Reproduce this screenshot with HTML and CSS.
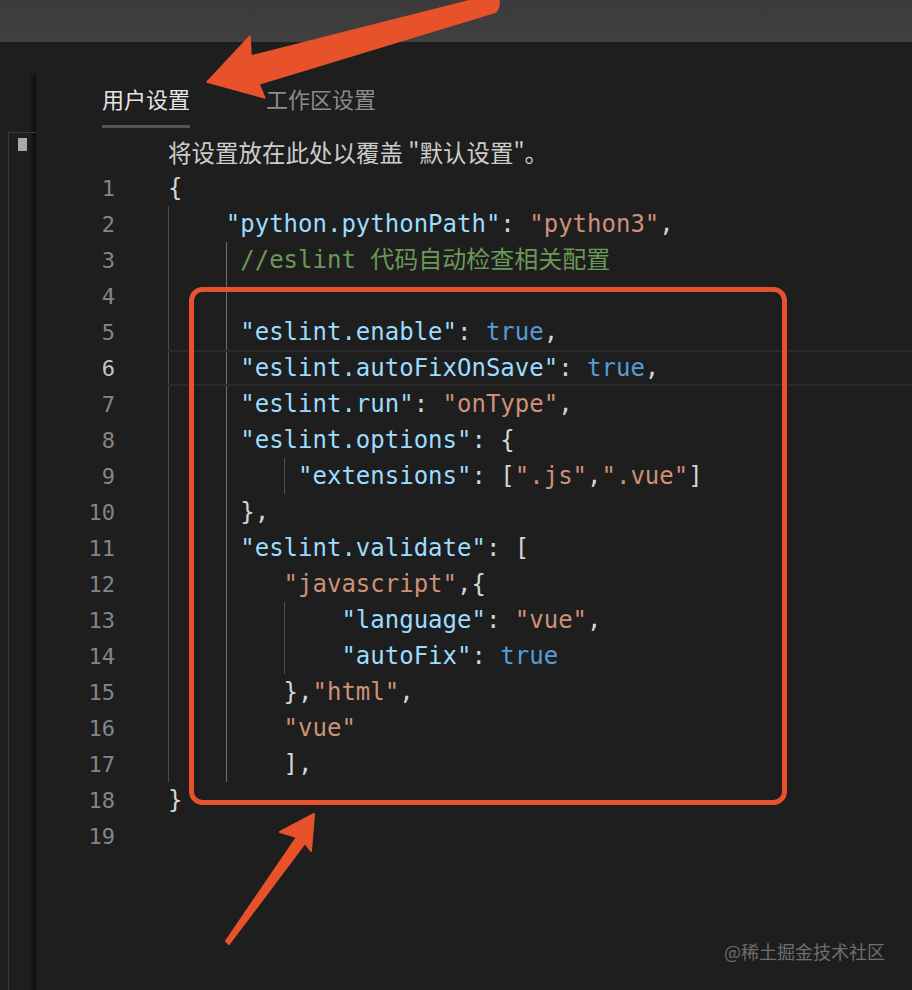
FILE: index.html
```html
<!DOCTYPE html>
<html lang="zh-CN">
<head>
<meta charset="utf-8">
<title>用户设置</title>
<link rel="stylesheet" href="styles.css">
</head>
<body>
<div class="window">
  <div class="titlebar"></div>
  <div class="main">
    <aside class="sidebar">
      <div class="sidebar-top"></div>
      <div class="sidebar-body">
        <div class="outline"><span class="marker"></span></div>
      </div>
    </aside>
    <section class="editor">
      <nav class="tabs">
        <span class="tab active">用户设置</span>
        <span class="tab">工作区设置</span>
      </nav>
      <div class="code">
        <div class="desc">将设置放在此处以覆盖 "默认设置"。</div>
        <div class="line"><span class="ln">1</span><span class="src"><span class="p">{</span></span></div>
        <div class="line"><span class="ln">2</span><span class="src"><span class="g g0">    </span><span class="k">"python.pythonPath"</span><span class="p">: </span><span class="s">"python3"</span><span class="p">,</span></span></div>
        <div class="line"><span class="ln">3</span><span class="src"><span class="g g0">    </span><span class="g g1"> </span><span class="c">//eslint 代码自动检查相关配置</span></span></div>
        <div class="line"><span class="ln">4</span><span class="src"><span class="g g0">    </span><span class="g g1"> </span></span></div>
        <div class="line"><span class="ln">5</span><span class="src"><span class="g g0">    </span><span class="g g1"> </span><span class="k">"eslint.enable"</span><span class="p">: </span><span class="b">true</span><span class="p">,</span></span></div>
        <div class="line current"><span class="ln">6</span><span class="src"><span class="g g0">    </span><span class="g g1"> </span><span class="k">"eslint.autoFixOnSave"</span><span class="p">: </span><span class="b">true</span><span class="p">,</span></span></div>
        <div class="line"><span class="ln">7</span><span class="src"><span class="g g0">    </span><span class="g g1"> </span><span class="k">"eslint.run"</span><span class="p">: </span><span class="s">"onType"</span><span class="p">,</span></span></div>
        <div class="line"><span class="ln">8</span><span class="src"><span class="g g0">    </span><span class="g g1"> </span><span class="k">"eslint.options"</span><span class="p">: {</span></span></div>
        <div class="line"><span class="ln">9</span><span class="src"><span class="g g0">    </span><span class="g g1">    </span><span class="g g2"> </span><span class="k">"extensions"</span><span class="p">: [</span><span class="s">".js"</span><span class="p">,</span><span class="s">".vue"</span><span class="p">]</span></span></div>
        <div class="line"><span class="ln">10</span><span class="src"><span class="g g0">    </span><span class="g g1"> </span><span class="p">},</span></span></div>
        <div class="line"><span class="ln">11</span><span class="src"><span class="g g0">    </span><span class="g g1"> </span><span class="k">"eslint.validate"</span><span class="p">: [</span></span></div>
        <div class="line"><span class="ln">12</span><span class="src"><span class="g g0">    </span><span class="g g1">    </span><span class="s">"javascript"</span><span class="p">,{</span></span></div>
        <div class="line"><span class="ln">13</span><span class="src"><span class="g g0">    </span><span class="g g1">    </span><span class="g g2">    </span><span class="k">"language"</span><span class="p">: </span><span class="s">"vue"</span><span class="p">,</span></span></div>
        <div class="line"><span class="ln">14</span><span class="src"><span class="g g0">    </span><span class="g g1">    </span><span class="g g2">    </span><span class="k">"autoFix"</span><span class="p">: </span><span class="b">true</span></span></div>
        <div class="line"><span class="ln">15</span><span class="src"><span class="g g0">    </span><span class="g g1">    </span><span class="p">},</span><span class="s">"html"</span><span class="p">,</span></span></div>
        <div class="line"><span class="ln">16</span><span class="src"><span class="g g0">    </span><span class="g g1">    </span><span class="s">"vue"</span></span></div>
        <div class="line"><span class="ln">17</span><span class="src"><span class="g g0">    </span><span class="g g1">    </span><span class="p">],</span></span></div>
        <div class="line"><span class="ln">18</span><span class="src"><span class="p">}</span></span></div>
        <div class="line"><span class="ln">19</span><span class="src"></span></div>
      </div>
    </section>
  </div>
  <svg class="annot" width="912" height="990" viewBox="0 0 912 990" xmlns="http://www.w3.org/2000/svg">
    <rect x="191.5" y="289.5" width="593" height="513" rx="11" ry="11" fill="none" stroke="#e8522a" stroke-width="5"/>
    <polygon points="207,82 250,36 251,56 480,-2 499,-2 499,6 496,12 259,84 265,98" fill="#e8522a" stroke="#e8522a" stroke-width="1.5" stroke-linejoin="round"/>
    <polygon points="314,814 280,832 297,837 226,941 229,944 305,843 311,851" fill="#e8522a" stroke="#e8522a" stroke-width="2" stroke-linejoin="round"/>
  </svg>
  <div class="watermark">@稀土掘金技术社区</div>
</div>
</body>
</html>
```

FILE: styles.css
```css
html, body {
  margin: 0;
  padding: 0;
  background: #1e1e1e;
}

.window {
  position: relative;
  width: 912px;
  height: 990px;
  overflow: hidden;
  background: #1e1e1e;
  display: flex;
  flex-direction: column;
}

.titlebar {
  height: 42px;
  flex: none;
  background: linear-gradient(to bottom, #3b3b3b, #404040);
}

.main {
  flex: 1;
  display: flex;
  min-height: 0;
}

.sidebar {
  width: 36px;
  flex: none;
  display: flex;
  flex-direction: column;
}

.sidebar-top {
  height: 33px;
  flex: none;
}

.sidebar-body {
  flex: 1;
  padding-top: 57px;
  display: flex;
  flex-direction: column;
  background: linear-gradient(to right, #1e1e1e 0, #1e1e1e 29px, #0c0c0c 36px);
}

.outline {
  flex: 1;
  margin-left: 8px;
  border-left: 1px solid #3c3c3c;
  border-top: 1px solid #3c3c3c;
  padding: 5px 0 0 9px;
}

.marker {
  display: block;
  width: 9px;
  height: 13px;
  background: #a9a9a9;
}

.editor {
  flex: 1;
  display: flex;
  flex-direction: column;
  min-width: 0;
}

.tabs {
  display: flex;
  gap: 76px;
  margin-top: 41px;
  padding-left: 66px;
}

.tab {
  font-family: "Noto Sans CJK SC", sans-serif;
  font-size: 22px;
  line-height: 30px;
  color: #8c8c8c;
  padding-bottom: 12px;
  border-bottom: 3px solid transparent;
}

.tab.active {
  color: #e6e6e6;
  border-bottom-color: #555555;
}

.code {
  margin-top: 6px;
  display: flex;
  flex-direction: column;
}

.desc {
  padding-left: 132px;
  font-family: "Noto Sans CJK SC", sans-serif;
  font-size: 23.5px;
  line-height: 36px;
  height: 36px;
  color: #cccccc;
}

.line {
  display: flex;
  height: 36px;
}

.ln {
  width: 79px;
  flex: none;
  text-align: right;
  font-family: "DejaVu Sans Mono", monospace;
  font-size: 22px;
  line-height: 37px;
  color: #858585;
}

.current .ln {
  color: #c6c6c6;
}

.src {
  flex: 1;
  margin-left: 53px;
  font-family: "DejaVu Sans Mono", "Noto Sans CJK SC", monospace;
  font-size: 24px;
  line-height: 36px;
  height: 36px;
  white-space: pre;
  color: #d4d4d4;
  box-sizing: border-box;
}

.current .src {
  border-top: 2px solid #2b2b2b;
  border-bottom: 2px solid #2b2b2b;
  line-height: 32px;
}

.g {
  display: inline-block;
  height: 36px;
  vertical-align: top;
}

.current .g {
  height: 32px;
}

.g0 { box-shadow: inset 1px 0 0 #4a4a4a; }
.g1 { box-shadow: inset 1px 0 0 #6e6e6e; }
.g2 { box-shadow: inset 1px 0 0 #4f4f4f; }

.p { color: #d4d4d4; }
.k { color: #9cdcfe; }
.s { color: #ce9178; }
.b { color: #569cd6; }
.c { color: #6a9955; }

.annot {
  position: absolute;
  left: 0;
  top: 0;
  pointer-events: none;
}

.watermark {
  position: absolute;
  right: 27px;
  top: 938px;
  font-family: "Noto Sans CJK SC", sans-serif;
  font-size: 18px;
  line-height: 26px;
  color: #6e6e6e;
}
```
